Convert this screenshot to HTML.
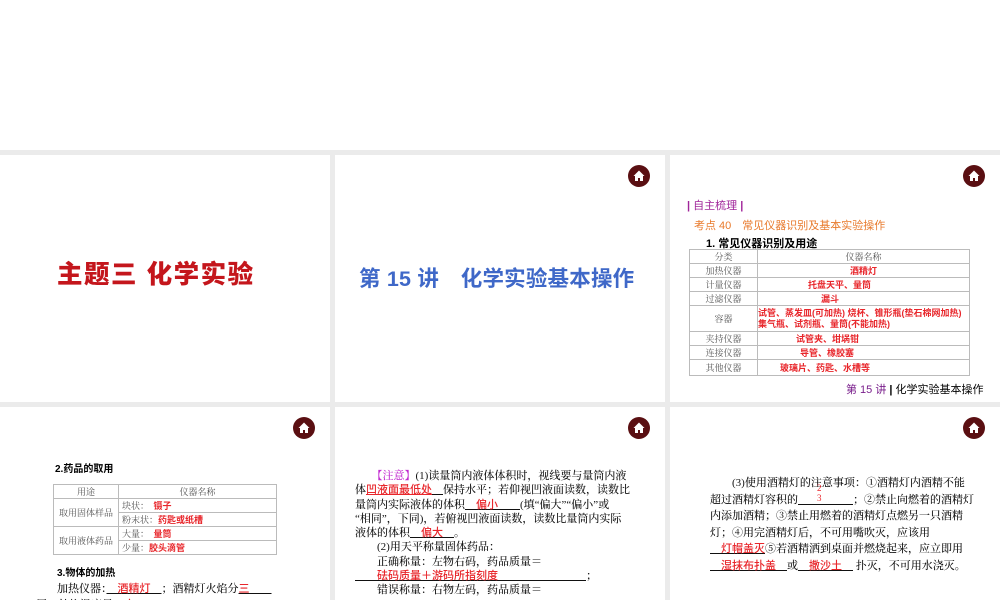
<!DOCTYPE html>
<html><head><meta charset="utf-8"><style>
*{margin:0;padding:0;box-sizing:border-box}
body{width:1000px;height:600px;background:#fff;position:relative;overflow:hidden;font-family:"Liberation Serif","Noto Serif CJK SC",serif;}
.bg{position:absolute;left:0;top:150px;width:1000px;height:450px;background:#ebebeb}
.s{position:absolute;background:#fff;overflow:hidden}
.a{position:absolute;white-space:nowrap}
.h{position:absolute;width:22px;height:22px;border-radius:50%;background:#5a0f12;left:293px;top:10px}
.h svg{position:absolute;left:4px;top:4px}
.r{color:#e8262b;font-family:"Liberation Sans","Noto Sans CJK SC",sans-serif;font-weight:bold}
.rr{color:#e8262b;font-family:"Liberation Sans","Noto Sans CJK SC",sans-serif}
.sans{font-family:"Liberation Sans","Noto Sans CJK SC",sans-serif}
table{border-collapse:collapse;position:absolute;font-size:9px;color:#555}
td{border:1px solid #bbb;padding:0 3px;height:14px;line-height:12px}
.u{text-decoration:underline;}
.body{color:#111;font-weight:500}
</style></head><body>
<div class="bg"></div>

<div class="s" style="left:0;top:155px;width:330px;height:247px">
<div class="a sans" style="left:57px;top:99px;font-size:25.5px;font-weight:900;color:#c4161c;letter-spacing:1.5px">主题三 化学实验</div>
</div>

<div class="s" style="left:335px;top:155px;width:330px;height:247px">
<div class="h"><svg width="14" height="14" viewBox="0 0 14 14"><path d="M7 1.5 L1.5 7 L3 7 L3 12 L6 12 L6 9 L8 9 L8 12 L11 12 L11 7 L12.5 7 Z" fill="#fff"/></svg></div>
<div class="a sans" style="left:24px;top:107px;font-size:21.5px;font-weight:bold;color:#3f68c8;letter-spacing:0.2px">第 15 讲　化学实验基本操作</div>
</div>

<div class="s" style="left:670px;top:155px;width:330px;height:247px">
<div class="h"><svg width="14" height="14" viewBox="0 0 14 14"><path d="M7 1.5 L1.5 7 L3 7 L3 12 L6 12 L6 9 L8 9 L8 12 L11 12 L11 7 L12.5 7 Z" fill="#fff"/></svg></div>
<div class="a sans" style="left:17px;top:42px;font-size:11px;color:#a0259a"><b>|</b> 自主梳理 <b>|</b></div>
<div class="a sans" style="left:24px;top:62px;font-size:11px;color:#e87a2c">考点 40　常见仪器识别及基本实验操作</div>
<div class="a sans" style="left:36px;top:80px;font-size:11px;font-weight:bold;color:#000">1. 常见仪器识别及用途</div>
<table style="left:19px;top:94px;width:281px">
<tr><td style="width:68px;text-align:center">分类</td><td style="text-align:center">仪器名称</td></tr>
<tr><td style="text-align:center">加热仪器</td><td class="r" style="text-align:center">酒精灯</td></tr>
<tr><td style="text-align:center">计量仪器</td><td class="r" style="padding-left:50px">托盘天平、量筒</td></tr>
<tr><td style="text-align:center">过滤仪器</td><td class="r" style="padding-left:63px">漏斗</td></tr>
<tr><td style="text-align:center;height:26px">容器</td><td class="r" style="font-size:9px;line-height:11px;padding:0;white-space:nowrap">试管、蒸发皿(可加热) 烧杯、锥形瓶(垫石棉网加热)<br>集气瓶、试剂瓶、量筒(不能加热)</td></tr>
<tr><td style="text-align:center">夹持仪器</td><td class="r" style="padding-left:38px">试管夹、坩埚钳</td></tr>
<tr><td style="text-align:center">连接仪器</td><td class="r" style="padding-left:42px">导管、橡胶塞</td></tr>
<tr><td style="text-align:center;height:16px">其他仪器</td><td class="r" style="padding-left:22px">玻璃片、药匙、水槽等</td></tr>
</table>
<div class="a sans" style="left:176px;top:226px;font-size:11px;color:#000"><span style="color:#7a1f8c">第 15 讲</span> <b>|</b> 化学实验基本操作</div>
</div>

<div class="s" style="left:0;top:407px;width:330px;height:193px">
<div class="h"><svg width="14" height="14" viewBox="0 0 14 14"><path d="M7 1.5 L1.5 7 L3 7 L3 12 L6 12 L6 9 L8 9 L8 12 L11 12 L11 7 L12.5 7 Z" fill="#fff"/></svg></div>
<div class="a sans" style="left:55px;top:53px;font-size:10px;font-weight:bold">2.药品的取用</div>
<table style="left:53px;top:77px;width:224px">
<tr><td style="text-align:center;width:65px">用途</td><td style="text-align:center">仪器名称</td></tr>
<tr><td rowspan="2" style="text-align:center">取用固体样品</td><td>块状：　<span class="r">镊子</span></td></tr>
<tr><td>粉末状：<span class="r">药匙或纸槽</span></td></tr>
<tr><td rowspan="2" style="text-align:center">取用液体药品</td><td>大量：　<span class="r">量筒</span></td></tr>
<tr><td>少量：<span class="r">胶头滴管</span></td></tr>
</table>
<div class="a sans" style="left:57px;top:157px;font-size:10px;font-weight:bold">3.物体的加热</div>
<div class="a body" style="left:57px;top:173px;font-size:11px">加热仪器：<span class="u">　<span class="rr">酒精灯</span>　</span>；酒精灯火焰分<span class="u"><span class="rr">三</span>　　</span></div>
<div class="a body" style="left:36px;top:189px;font-size:11px">层，外焰温度最　<span class="rr">高</span></div>
</div>

<div class="s" style="left:335px;top:407px;width:330px;height:193px">
<div class="h"><svg width="14" height="14" viewBox="0 0 14 14"><path d="M7 1.5 L1.5 7 L3 7 L3 12 L6 12 L6 9 L8 9 L8 12 L11 12 L11 7 L12.5 7 Z" fill="#fff"/></svg></div>
<div class="a body" style="left:20px;top:62px;font-size:11px;line-height:14.3px">
　　<span style="color:#c22bd0">【注意】</span>(1)读量筒内液体体积时，视线要与量筒内液<br>
体<span class="u rr">凹液面最低处</span><span class="u">　</span>保持水平；若仰视凹液面读数，读数比<br>
量筒内实际液体的体积<span class="u">　<span class="rr">偏小</span>　　</span>(填“偏大”“偏小”或<br>
“相同”，下同)，若俯视凹液面读数，读数比量筒内实际<br>
液体的体积<span class="u">　<span class="rr">偏大</span>　</span>。<br>
　　(2)用天平称量固体药品：<br>
　　正确称量：左物右码，药品质量＝<br>
<span class="u">　　<span class="rr">砝码质量＋游码所指刻度</span>　　　　　　　　</span>；<br>
　　错误称量：右物左码，药品质量＝</div>
</div>

<div class="s" style="left:670px;top:407px;width:330px;height:193px">
<div class="h"><svg width="14" height="14" viewBox="0 0 14 14"><path d="M7 1.5 L1.5 7 L3 7 L3 12 L6 12 L6 9 L8 9 L8 12 L11 12 L11 7 L12.5 7 Z" fill="#fff"/></svg></div>
<div class="a body" style="left:40px;top:68px;font-size:11px;line-height:16.5px">
　　(3)使用酒精灯的注意事项：①酒精灯内酒精不能<br>
超过酒精灯容积的<span class="u">　　　　　</span>；②禁止向燃着的酒精灯<br>
内添加酒精；③禁止用燃着的酒精灯点燃另一只酒精<br>
灯；④用完酒精灯后，不可用嘴吹灭，应该用<br>
<span class="u">　<span class="rr">灯帽盖灭</span></span>⑤若酒精洒到桌面并燃烧起来，应立即用<br>
<span class="u">　<span class="rr">湿抹布扑盖</span>　</span>或<span class="u">　<span class="rr">撒沙土</span>　</span> 扑灭，不可用水浇灭。</div>
<div class="a" style="left:147px;top:76px;font-size:9px;color:#e8262b;line-height:10px;text-align:center">2<br>3</div>
</div>
</body></html>
